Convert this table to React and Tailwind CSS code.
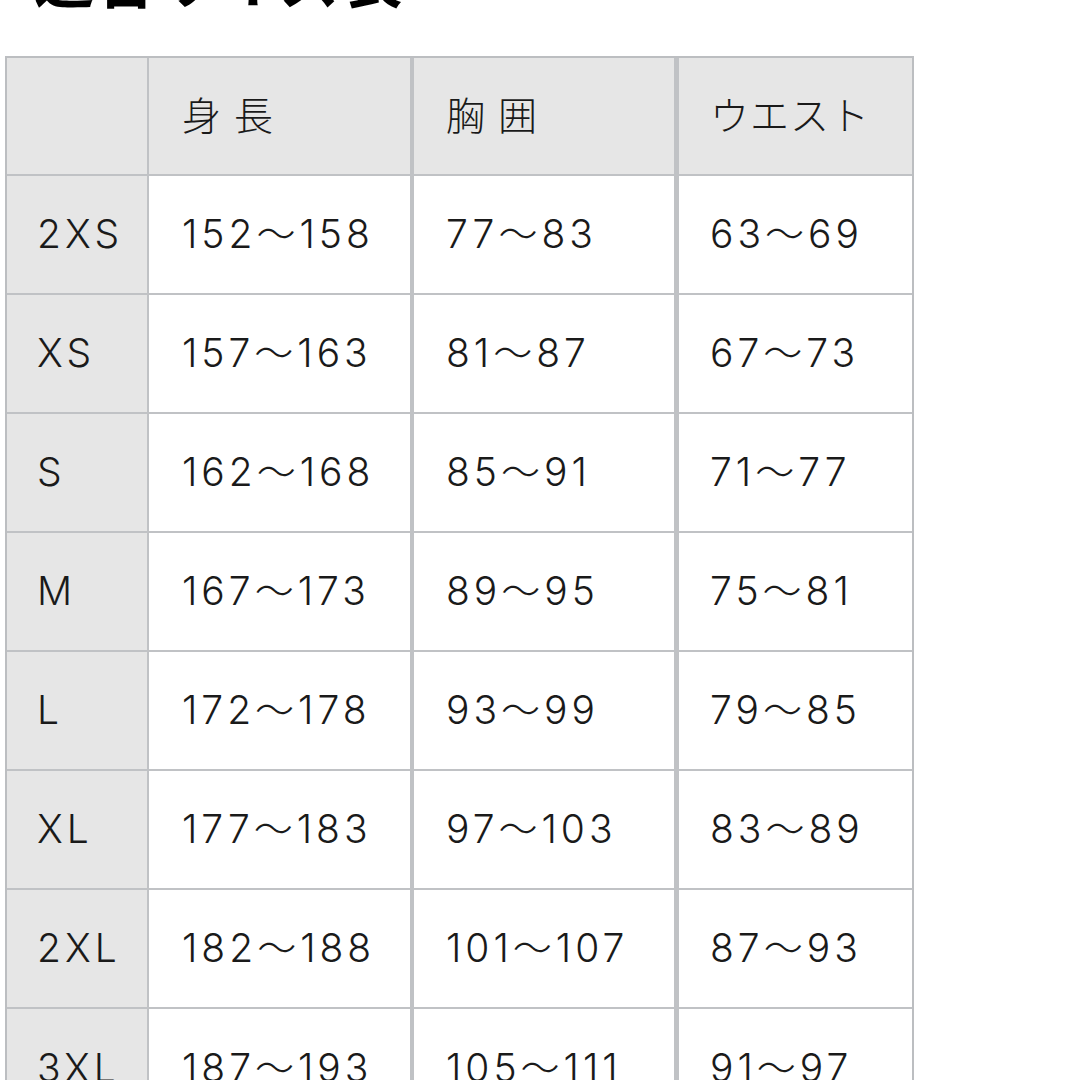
const headers = ["", "身 長", "胸 囲", "ウエスト"];

const rows = [
  ["2XS", "152〜158", "77〜83", "63〜69"],
  ["XS", "157〜163", "81〜87", "67〜73"],
  ["S", "162〜168", "85〜91", "71〜77"],
  ["M", "167〜173", "89〜95", "75〜81"],
  ["L", "172〜178", "93〜99", "79〜85"],
  ["XL", "177〜183", "97〜103", "83〜89"],
  ["2XL", "182〜188", "101〜107", "87〜93"],
  ["3XL", "187〜193", "105〜111", "91〜97"],
];

// right-hand rule of each column (the middle ones are heavier in the picture)
const colBorder = [
  "border-r-2 pl-[30px]",
  "border-r-4 pl-[33px]",
  "border-r-[5px] pl-[32px]",
  "pl-[31px]",
];

function Cell({ col, shaded, last, height, spacing, children }) {
  return (
    <div
      className={`flex items-center border-[#c0c2c5] text-[39px] font-light text-[#1a1a1a] ${spacing} ${colBorder[col]} ${
        last ? "" : "border-b-2"
      } ${shaded ? "bg-[#e6e6e6]" : "bg-white"} ${height}`}
    >
      {children}
    </div>
  );
}

export default function App() {
  return (
    <div
      className="h-[1080px] w-[1080px] overflow-hidden bg-white"
      style={{ fontFamily: 'Inter, "Noto Sans CJK JP", sans-serif' }}
    >
      {/* Title, mostly scrolled out of view */}
      <h1
        className="ml-[34px] mt-[-53px] text-[60px] font-bold leading-none tracking-[2px] text-black"
        style={{ fontFamily: '"Noto Sans CJK JP", sans-serif' }}
      >
        適合サイズ表
      </h1>

      {/* Size table */}
      <div className="ml-[5px] mt-[49px] w-[909px] border-2 border-[#bcbec1]">
        <div className="grid grid-cols-[142px_265px_265px_233px]">
          {headers.map((h, i) => (
            <Cell key={i} col={i} shaded height="h-[118px]" spacing="tracking-[1px]">
              {h}
            </Cell>
          ))}
          {rows.map((r, ri) =>
            r.map((v, ci) => (
              <Cell
                key={`${ri}-${ci}`}
                col={ci}
                shaded={ci === 0}
                last={ri === rows.length - 1}
                height="h-[119px]"
                spacing="tracking-[4px]"
              >
                {v}
              </Cell>
            ))
          )}
        </div>
      </div>
    </div>
  );
}
